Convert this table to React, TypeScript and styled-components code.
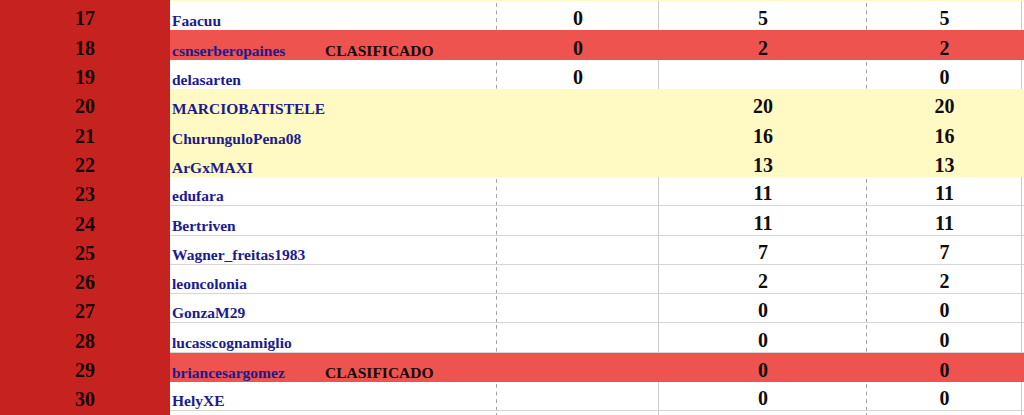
import React from "react";
import styled, { createGlobalStyle, css } from "styled-components";

const Global = createGlobalStyle`
  html, body { margin: 0; padding: 0; background: #ffffff; }
  body { font-family: "Liberation Serif", "Times New Roman", serif; overflow: hidden; }
`;

type Fill = "white" | "red" | "cream";

const fills: Record<Fill, string> = {
  white: "#ffffff",
  red: "#ef5350",
  cream: "#fff9c4",
};

const Sheet = styled.div`
  width: 1024px;
  height: 415px;
  overflow: hidden;
  display: flex;
  flex-direction: column;
`;

const Row = styled.div<{ $h: number }>`
  display: grid;
  grid-template-columns: 170px 155px 172px 162px 208px 155px 1fr;
  height: ${(p) => p.$h}px;
  flex: none;
`;

const RankCell = styled.div`
  background: #c62320;
  color: #160404;
  font-weight: 700;
  font-size: 20px;
  display: flex;
  align-items: flex-end;
  justify-content: center;
  line-height: normal;
  overflow: visible;
`;

type Line = "none" | "dashed" | "solid";

const Cell = styled.div<{
  $fill: Fill;
  $line: Line;
  $rule: boolean;
  $align: "left" | "center";
  $kind: "name" | "status" | "num";
}>`
  background-color: ${(p) => fills[p.$fill]};
  display: flex;
  align-items: flex-end;
  justify-content: ${(p) => (p.$align === "center" ? "center" : "flex-start")};
  white-space: nowrap;
  overflow: visible;
  position: relative;
  min-width: 0;
  line-height: normal;
  font-weight: 700;
  ${(p) =>
    p.$kind === "name" &&
    css`
      color: #1b1b8e;
      font-size: 15.5px;
      padding-left: 2px;
    `}
  ${(p) =>
    p.$kind === "status" &&
    css`
      color: #120606;
      font-size: 15.5px;
    `}
  ${(p) =>
    p.$kind === "num" &&
    css`
      color: #0d0d0d;
      font-size: 20px;
    `}
  ${(p) =>
    p.$fill === "white" &&
    p.$line === "dashed" &&
    css`
      background-image: linear-gradient(to bottom, #a2a2a2 50%, transparent 50%);
      background-size: 1px 7.6px;
      background-repeat: repeat-y;
      background-position: right 0 top 2px;
    `}
  ${(p) =>
    p.$fill === "white" &&
    p.$line === "solid" &&
    css`
      box-shadow: inset -1px 0 0 #cccccc;
    `}
  ${(p) =>
    p.$rule &&
    css`
      border-bottom: 1px solid #d5d5d5;
    `}
`;

const Name = styled.span`
  position: relative;
  z-index: 1;
`;

type RowData = {
  rank: string;
  name: string;
  status?: string;
  b?: string;
  c?: string;
  d?: string;
  fill: Fill;
  rule: boolean;
  h: number;
};

const H = 29.3;

const rows: RowData[] = [
  { rank: "", name: "", fill: "cream", rule: false, h: 1.2 },
  { rank: "17", name: "Faacuu", b: "0", c: "5", d: "5", fill: "white", rule: false, h: H },
  { rank: "18", name: "csnserberopaines", status: "CLASIFICADO", b: "0", c: "2", d: "2", fill: "red", rule: false, h: H },
  { rank: "19", name: "delasarten", b: "0", d: "0", fill: "white", rule: false, h: H },
  { rank: "20", name: "MARCIOBATISTELE", c: "20", d: "20", fill: "cream", rule: false, h: H },
  { rank: "21", name: "ChurunguloPena08", c: "16", d: "16", fill: "cream", rule: false, h: H },
  { rank: "22", name: "ArGxMAXI", c: "13", d: "13", fill: "cream", rule: false, h: H },
  { rank: "23", name: "edufara", c: "11", d: "11", fill: "white", rule: true, h: H },
  { rank: "24", name: "Bertriven", c: "11", d: "11", fill: "white", rule: true, h: H },
  { rank: "25", name: "Wagner_freitas1983", c: "7", d: "7", fill: "white", rule: true, h: H },
  { rank: "26", name: "leoncolonia", c: "2", d: "2", fill: "white", rule: true, h: H },
  { rank: "27", name: "GonzaM29", c: "0", d: "0", fill: "white", rule: true, h: H },
  { rank: "28", name: "lucasscognamiglio", c: "0", d: "0", fill: "white", rule: true, h: H },
  { rank: "29", name: "briancesargomez", status: "CLASIFICADO", c: "0", d: "0", fill: "red", rule: false, h: H },
  { rank: "30", name: "HelyXE", c: "0", d: "0", fill: "white", rule: true, h: H },
  { rank: "", name: "", fill: "white", rule: false, h: H },
];

export default function App() {
  return (
    <>
      <Global />
      <Sheet>
        {rows.map((r, i) => (
          <Row key={i} $h={r.h}>
            <RankCell>{r.rank}</RankCell>
            <Cell $fill={r.fill} $line="none" $rule={r.rule} $align="left" $kind="name">
              <Name>{r.name}</Name>
            </Cell>
            <Cell $fill={r.fill} $line="dashed" $rule={r.rule} $align="left" $kind="status">
              {r.status ?? ""}
            </Cell>
            <Cell $fill={r.fill} $line="solid" $rule={r.rule} $align="center" $kind="num">
              {r.b ?? ""}
            </Cell>
            <Cell $fill={r.fill} $line="dashed" $rule={r.rule} $align="center" $kind="num">
              {r.c ?? ""}
            </Cell>
            <Cell $fill={r.fill} $line="solid" $rule={r.rule} $align="center" $kind="num">
              {r.d ?? ""}
            </Cell>
            <Cell $fill={r.fill} $line="none" $rule={r.rule} $align="left" $kind="num" />
          </Row>
        ))}
      </Sheet>
    </>
  );
}
